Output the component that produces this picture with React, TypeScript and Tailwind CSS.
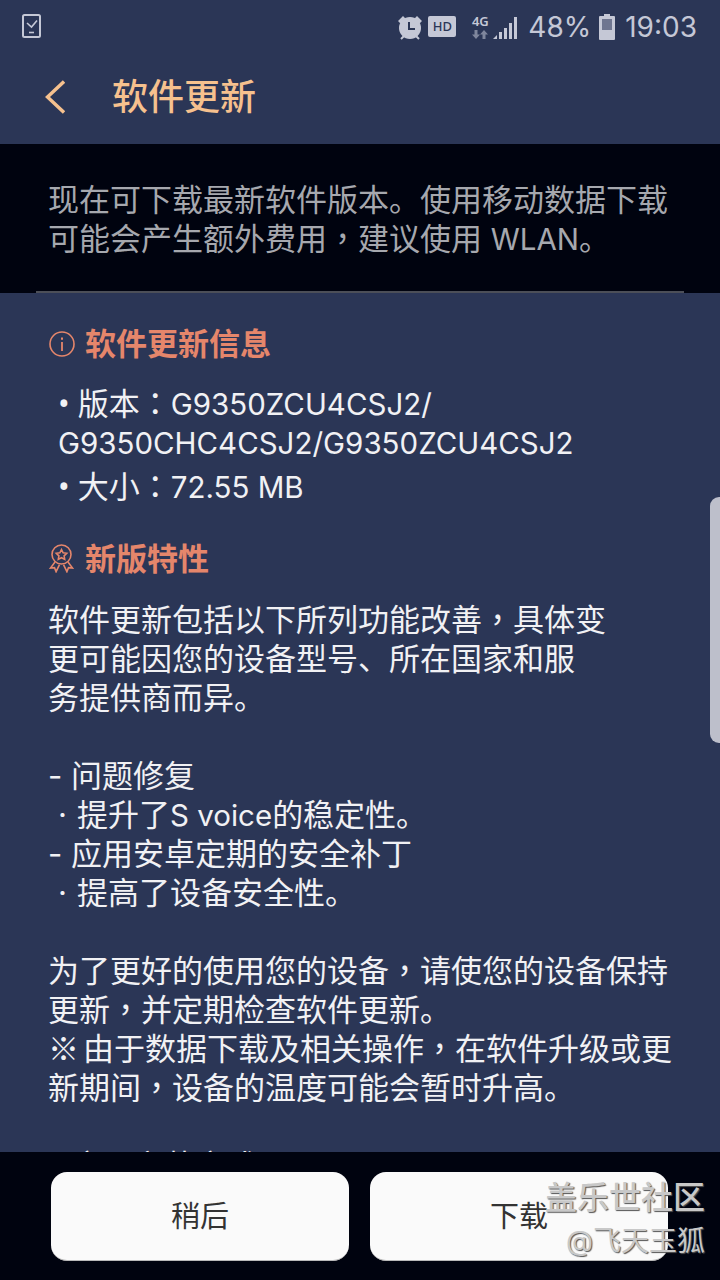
import React from 'react';

const cjk = 'font-["Inter","Noto_Sans_CJK_SC",sans-serif]';
// centred full-width punctuation, as on the device
const Tc = ({ children }: { children: string }) => <span className='font-["Noto_Sans_CJK_TC",sans-serif] leading-[0]'>{children}</span>;
const Lat = ({ children }: { children: string }) => <span className="text-[29.5px] leading-[0]">{children}</span>;
const Bullet = () => <span className="font-['Noto_Sans',sans-serif] leading-[0]">• </span>;

const StatusBar = () => (
  <div className="flex h-[53px] shrink-0 items-center justify-between pl-[22px] pr-[23px] text-[#c5c8d6]">
    <svg width="20" height="25" viewBox="0 0 20 25" fill="none" stroke="currentColor">
      <rect x="1" y="1" width="17" height="22" rx="1.5" strokeWidth="2" />
      <path d="M5 9l4.5 4L15 6.5" strokeWidth="1.6" />
      <path d="M7 18.5h5" strokeWidth="1.6" />
    </svg>
    <div className="flex items-center">
      <svg width="26" height="26" viewBox="0 0 26 26" className="mr-[5px]">
        <circle cx="13" cy="14" r="11" fill="currentColor" />
        <path d="M1 7l5-5 2.5 2.5-5 5zM25 7l-5-5-2.5 2.5 5 5z" fill="currentColor" />
        <path d="M4 25l3-3M22 25l-3-3" stroke="currentColor" strokeWidth="2" />
        <path d="M12 8v7h6" fill="none" stroke="#2b3656" strokeWidth="2" />
      </svg>
      <div className="mr-[14px] flex h-[21px] w-[28px] items-center justify-center rounded-[2px] bg-[#c5c8d6] font-['Noto_Sans',sans-serif] text-[13px] font-medium text-[#2b3656]">
        HD
      </div>
      <div className="mr-[3px] flex w-[20px] flex-col items-center leading-none">
        <span className="font-['Noto_Sans',sans-serif] text-[13px] font-semibold leading-[13px]">4G</span>
        <svg width="16" height="9" viewBox="0 0 16 9" fill="#7f869c" className="mt-[2px]">
          <path d="M4 9L0 4.5h2.5V0h3v4.5H8zM12 0l4 4.5h-2.5V9h-3V4.5H8z" />
        </svg>
      </div>
      <svg width="26" height="24" viewBox="0 0 26 24" fill="currentColor" className="mr-[9px]">
        <path d="M0 24l4-4v4zM6 24v-7h3v7zM11 24V13h3v11zM16 24V8h3v16zM21 24V2h3v22z" />
      </svg>
      <span className="font-['Inter',sans-serif] text-[28px] leading-none">48%</span>
      <svg width="16" height="26" viewBox="0 0 16 26" className="ml-[8px] mr-[10px]">
        <path d="M5 0h6v2h4a1 1 0 0 1 1 1v22a1 1 0 0 1-1 1H1a1 1 0 0 1-1-1V3a1 1 0 0 1 1-1h4z" fill="currentColor" />
        <rect x="3" y="5" width="10" height="11" fill="#6f7690" />
      </svg>
      <span className="font-['Inter',sans-serif] text-[28px] leading-none">19:03</span>
    </div>
  </div>
);

const Header = () => (
  <div className="flex h-[91px] shrink-0 items-center pb-[4px] pl-[45px]">
    <svg width="20" height="34" viewBox="0 0 20 34" fill="none" stroke="#f6c18e" strokeWidth="3.4">
      <path d="M19 1.5L2.5 17 19 32.5" />
    </svg>
    <h1 className={`ml-[47px] ${cjk} text-[36px] font-medium leading-none text-[#f6c18e]`}>软件更新</h1>
  </div>
);

const Notice = () => (
  <div className="flex h-[149px] shrink-0 flex-col bg-[#00030f]">
    <p className={`flex-1 pl-[48px] pt-[36px] ${cjk} text-[31px] leading-[39px] text-[#a6a8ae]`}>
      现在可下载最新软件版本。使用移动数据下载
      <br />
      可能会产生额外费用<Tc>，</Tc>建议使用 <Lat>WLAN</Lat>。
    </p>
    <div className="mx-[36px] h-[2px] bg-[#4c4f58]" />
  </div>
);

const SectionTitle = ({ icon, title }: { icon: React.ReactNode; title: string }) => (
  <div className="flex items-center">
    <span className="flex w-[36px] shrink-0">{icon}</span>
    <h2 className={`${cjk} text-[31px] font-bold leading-[39px] text-[#e5866b]`}>{title}</h2>
  </div>
);

const Content = () => (
  <div className="relative min-h-0 flex-1 overflow-hidden">
    <div className="pl-[49px] pt-[31px] text-[#f1f1f4]">
      <SectionTitle
        title="软件更新信息"
        icon={
          <svg width="26" height="26" viewBox="0 0 26 26" fill="none" stroke="#e5866b">
            <circle cx="13" cy="13" r="12" strokeWidth="1.6" />
            <path d="M13 11v9" strokeWidth="1.8" />
            <path d="M13 6.5v2.2" strokeWidth="2" />
          </svg>
        }
      />
      <div className={`mt-[21px] pl-[9px] ${cjk} text-[31px] leading-[39px]`}>
        <p>
          <Bullet />版本<Tc>：</Tc><Lat>G9350ZCU4CSJ2/</Lat>
        </p>
        <p><Lat>G9350CHC4CSJ2/G9350ZCU4CSJ2</Lat></p>
        <p className="mt-[5px]">
          <Bullet />大小<Tc>：</Tc><Lat>72.55 MB</Lat>
        </p>
      </div>
      <div className="mt-[33px]">
        <SectionTitle
          title="新版特性"
          icon={
            <svg width="25" height="29" viewBox="0 0 25 29" fill="none" stroke="#e5866b" strokeWidth="1.6">
              <circle cx="12.5" cy="10.5" r="9.5" />
              <path d="M12.5 5.5l1.6 3.3 3.6.5-2.6 2.5.6 3.6-3.2-1.7-3.2 1.7.6-3.6-2.6-2.5 3.6-.5z" />
              <path d="M6 18l-4.5 6 4-.3 1.6 4 3.4-7M19 18l4.5 6-4-.3-1.6 4-3.4-7" />
            </svg>
          }
        />
      </div>
      <div className={`mt-[22px] -ml-[1px] ${cjk} text-[31px] leading-[39px]`}>
        <p>软件更新包括以下所列功能改善<Tc>，</Tc>具体变</p>
        <p>更可能因您的设备型号、所在国家和服</p>
        <p>务提供商而异。</p>
        <p className="h-[39px]" />
        <p>- 问题修复</p>
        <p><span className="inline-block w-[29px] pl-[10px]">·</span>提升了<Lat>S voice</Lat>的稳定性。</p>
        <p>- 应用安卓定期的安全补丁</p>
        <p><span className="inline-block w-[29px] pl-[10px]">·</span>提高了设备安全性。</p>
        <p className="h-[39px]" />
        <p>为了更好的使用您的设备<Tc>，</Tc>请使您的设备保持</p>
        <p>更新<Tc>，</Tc>并定期检查软件更新。</p>
        <p><span className='inline-block w-[35px] font-["Noto_Sans_CJK_SC",sans-serif] leading-[0]'>※</span>由于数据下载及相关操作<Tc>，</Tc>在软件升级或更</p>
        <p>新期间<Tc>，</Tc>设备的温度可能会暂时升高。</p>
        <p className="h-[39px]" />
        <p>- 应用安装方式</p>
      </div>
    </div>
    {/* scroll handle */}
    <div className="absolute right-0 top-[204px] h-[246px] w-[10px] rounded-l-[9px] bg-[#bdbfcb]" />
  </div>
);

const BottomBar = () => (
  <div className="relative flex h-[128px] shrink-0 gap-[21px] bg-[#00030f] pl-[51px] pt-[20px]">
    <button className={`h-[89px] w-[298px] rounded-[16px] border-b border-[#b9b9b9] bg-[#fafafa] pt-[2px] ${cjk} text-[29px] text-[#333333]`}>稍后</button>
    <button className={`h-[89px] w-[298px] rounded-[16px] border-b border-[#b9b9b9] bg-[#fafafa] pt-[2px] ${cjk} text-[29px] text-[#333333]`}>下载</button>
    {/* watermark */}
    <div className={`absolute right-[15px] top-[24px] flex flex-col items-end ${cjk} text-[#c8c8c8]`}>
      <span className="text-[32px] font-medium leading-[44px] [text-shadow:1px_1px_1px_#555]">盖乐世社区</span>
      <span className="text-[28px] leading-[42px] [text-shadow:1px_1px_1px_#555]">@飞天玉狐</span>
    </div>
  </div>
);

export default function App() {
  return (
    <div className="flex h-[1280px] w-[720px] flex-col overflow-hidden bg-[#2b3656]">
      <StatusBar />
      <Header />
      <Notice />
      <Content />
      <BottomBar />
    </div>
  );
}
